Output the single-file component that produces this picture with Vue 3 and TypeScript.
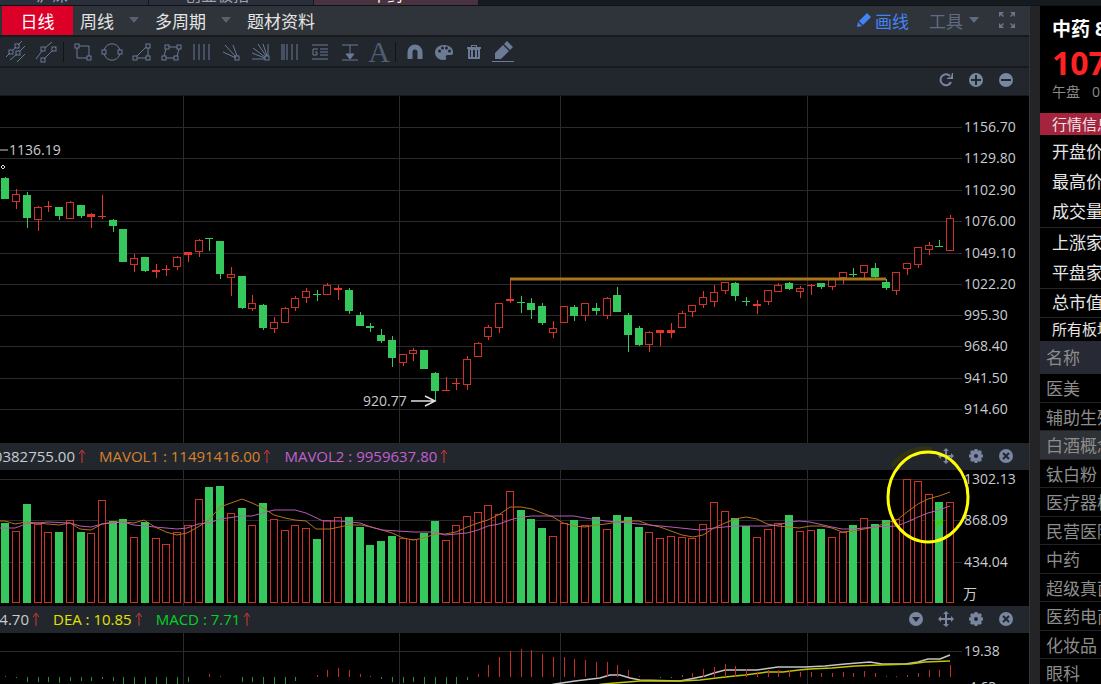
<script setup lang="ts">
type Candle = [dir: 'u' | 'd', high: number, top: number, bottom: number, low: number]
type Point = [number, number]

const candles: Candle[] = [
  ['d', 177, 178, 199, 199], ['u', 189, 194, 202, 209], ['d', 192, 195, 218, 228], ['u', 206, 207, 220, 231],
  ['u', 201, 206, 207, 212], ['d', 207, 207, 216, 220], ['u', 201, 202, 219, 219], ['d', 205, 205, 216, 218],
  ['u', 213, 214, 217, 228], ['u', 195, 216, 217, 219], ['d', 219, 220, 226, 232], ['d', 229, 229, 262, 262],
  ['u', 254, 258, 265, 272], ['d', 257, 257, 271, 272], ['u', 264, 270, 272, 278], ['u', 265, 269, 270, 276],
  ['u', 256, 257, 267, 270], ['u', 252, 252, 255, 262], ['u', 239, 240, 252, 257], ['d', 238, 238, 239, 251],
  ['d', 241, 241, 274, 279], ['u', 267, 274, 278, 296], ['d', 276, 276, 308, 309], ['u', 295, 303, 309, 311],
  ['d', 304, 305, 328, 330], ['u', 317, 322, 329, 333], ['u', 307, 308, 323, 323], ['u', 296, 298, 308, 311],
  ['u', 288, 291, 298, 303], ['d', 290, 294, 295, 301], ['u', 283, 285, 295, 295], ['u', 285, 288, 290, 300],
  ['d', 288, 290, 311, 314], ['d', 312, 315, 326, 326], ['d', 323, 326, 328, 332], ['d', 329, 335, 341, 343],
  ['d', 336, 340, 358, 367], ['u', 354, 354, 363, 366], ['u', 348, 350, 354, 361], ['d', 350, 350, 369, 369],
  ['d', 372, 373, 391, 401], ['u', 377, 390, 391, 391], ['u', 378, 383, 384, 390], ['u', 356, 359, 385, 390],
  ['u', 342, 343, 357, 357], ['u', 325, 327, 337, 340], ['u', 303, 303, 328, 333], ['u', 278, 299, 301, 303],
  ['d', 296, 302, 303, 313], ['d', 298, 303, 310, 319], ['d', 303, 306, 323, 325], ['u', 321, 328, 333, 338],
  ['u', 306, 306, 323, 323], ['d', 305, 307, 316, 321], ['u', 303, 303, 316, 321], ['d', 303, 308, 311, 315],
  ['u', 297, 298, 316, 319], ['d', 287, 295, 312, 312], ['d', 313, 315, 335, 352], ['d', 326, 328, 345, 346],
  ['u', 331, 332, 345, 352], ['u', 330, 330, 333, 346], ['u', 323, 330, 333, 338], ['u', 311, 313, 328, 328],
  ['u', 305, 305, 312, 317], ['u', 291, 297, 305, 308], ['u', 285, 292, 302, 307], ['u', 282, 282, 291, 294],
  ['d', 282, 283, 296, 301], ['d', 297, 301, 302, 306], ['u', 300, 304, 306, 314], ['u', 290, 290, 302, 305],
  ['u', 283, 285, 292, 292], ['d', 282, 283, 289, 290], ['u', 286, 288, 292, 298], ['u', 284, 285, 286, 295],
  ['d', 283, 283, 287, 289], ['u', 279, 279, 287, 290], ['u', 272, 272, 278, 284], ['d', 268, 274, 275, 277],
  ['u', 265, 265, 273, 278], ['d', 263, 268, 277, 278], ['d', 279, 282, 288, 290], ['u', 272, 272, 291, 295],
  ['u', 263, 263, 269, 275], ['u', 247, 247, 265, 268], ['u', 242, 245, 250, 255], ['d', 240, 246, 247, 247],
  ['u', 215, 218, 251, 251],
]

const volumeTops = [
  523, 531, 504, 524, 532, 532, 520, 532, 533, 500, 521, 519, 537, 522, 538, 544, 532, 525, 499, 487,
  486, 513, 508, 525, 503, 519, 530, 525, 528, 539, 520, 517, 517, 527, 545, 541, 536, 538, 539, 533,
  521, 540, 525, 516, 512, 505, 514, 491, 510, 519, 528, 536, 523, 520, 525, 517, 529, 515, 517, 527,
  532, 538, 536, 537, 538, 524, 502, 511, 518, 526, 537, 529, 523, 515, 531, 530, 529, 537, 532, 525,
  518, 524, 520, 519, 479, 481, 494, 502, 502,
]

// Ends of the histogram bars; values above the zero line are lower than ZERO.
const ZERO = 677
const histogram = [
  676, 678, 682, 682, 682, 683, 681, 681, 681, 679, 681, 684, 684, 684, 684, 684, 684, 682, 677, 674,
  676, 677, 682, 682, 684, 684, 684, 681, 677, 675, 670, 668, 670, 674, 676, 679, 682, 683, 682, 684,
  684, 684, 684, 680, 674, 665, 657, 651, 649, 650, 654, 657, 657, 659, 660, 662, 662, 665, 670, 676,
  677, 678, 678, 675, 673, 669, 667, 664, 666, 669, 672, 670, 670, 670, 672, 672, 673, 673, 672, 673,
  671, 673, 676, 676, 675, 673, 670, 670, 665,
]

const fastAverage: Point[] = [
  [0, 521], [5, 521], [15, 524], [26, 522], [37, 523], [59, 525], [70, 523], [80, 529], [91, 530], [102, 524],
  [112, 522], [123, 522], [134, 523], [144, 520], [155, 527], [166, 532], [177, 535], [187, 533], [198, 527],
  [209, 520], [220, 507], [242, 499], [252, 503], [263, 508], [274, 515], [285, 518], [295, 520], [306, 521],
  [316, 529], [330, 529], [349, 525], [361, 525], [371, 527], [382, 530], [392, 533], [403, 538], [413, 540],
  [424, 538], [435, 534], [445, 534], [456, 532], [467, 527], [478, 523], [488, 520], [500, 514], [510, 507],
  [521, 507], [532, 509], [542, 513], [553, 517], [563, 523], [574, 526], [585, 527], [596, 525], [606, 524],
  [617, 522], [628, 521], [639, 521], [650, 525], [660, 527], [671, 531], [682, 535], [693, 537], [703, 535],
  [714, 528], [725, 523], [735, 519], [746, 517], [757, 519], [767, 524], [778, 526], [789, 527], [799, 528],
  [810, 526], [821, 526], [832, 528], [842, 532], [853, 531], [864, 529], [875, 527], [886, 523], [897, 520],
  [907, 512], [918, 504], [928, 499], [939, 496], [950, 492],
]
const slowAverage: Point[] = [
  [0, 528], [15, 528], [26, 524], [48, 522], [70, 523], [80, 526], [91, 527], [102, 524], [123, 522], [134, 525],
  [155, 527], [177, 529], [187, 528], [198, 524], [209, 523], [220, 519], [242, 516], [252, 516], [263, 513],
  [274, 510], [295, 510], [306, 513], [323, 521], [340, 521], [360, 523], [371, 527], [382, 530], [413, 532],
  [435, 532], [445, 535], [456, 534], [467, 533], [478, 530], [488, 526], [499, 524], [510, 520], [521, 517],
  [532, 516], [574, 516], [585, 518], [606, 521], [628, 523], [650, 525], [671, 527], [700, 530], [714, 528],
  [735, 526], [767, 526], [778, 525], [789, 522], [799, 521], [810, 522], [832, 527], [842, 529], [853, 529],
  [864, 528], [875, 527], [897, 526], [907, 522], [918, 517], [928, 513], [939, 510], [950, 506],
]
const difLine: Point[] = [
  [545, 686], [555, 684], [575, 681], [600, 678], [610, 675], [620, 675], [630, 678], [640, 680], [680, 681],
  [695, 678], [705, 676], [714, 673], [725, 670], [757, 670], [778, 667], [805, 667], [825, 666], [845, 664],
  [870, 662], [882, 664], [905, 664], [918, 662], [928, 659], [940, 659], [950, 655],
]
const deaLine: Point[] = [
  [590, 686], [603, 684], [640, 681], [680, 681], [700, 680], [725, 677], [745, 675], [767, 672], [783, 672],
  [799, 670], [810, 669], [832, 668], [855, 666], [880, 665], [910, 664], [925, 662], [950, 661],
]

const priceAxis: [number, string][] = [
  [127, '1156.70'], [158, '1129.80'], [190, '1102.90'], [221, '1076.00'], [253, '1049.10'],
  [284, '1022.20'], [315, '995.30'], [346, '968.40'], [378, '941.50'], [409, '914.60'],
]
const volumeAxis: [number, string][] = [[479, '1302.13'], [520, '868.09'], [562, '434.04']]
const timeMarks = [183, 399, 560, 807]

const barX = (i: number): number => Math.round(5.4 + 10.735 * i)
const toPoints = (line: Point[]): string => line.map((p) => p.join(',')).join(' ')

const tabs = ['沪深', '创业板指', '中药']
const quotes = [['开盘价', '最高价', '成交量'], ['上涨家数', '平盘家数'], ['总市值']]
const sectors = ['医美', '辅助生殖', '白酒概念', '钛白粉', '医疗器械', '民营医院', '中药', '超级真菌', '医药电商', '化妆品', '眼科']

type Shape = { name: string; path: string; nodes?: Point[]; fill?: string }
const channelTools: Shape[] = [
  { name: '平行线', path: 'M2 17 6 13M9 10 12 7M14 5 18 1M6 20 13 14M16 11 21 6M13 22 21 14', nodes: [[13, 6], [7, 12], [14, 13]] },
  { name: '通道线', path: 'M1 19 7 11M10 8 17 2M9 19 17 11M20 8 21 7', nodes: [[8, 9], [19, 9], [8, 20]] },
]
const shapeTools: Shape[] = [
  { name: '矩形', path: 'M8 6H18V16M16 18H6V8', nodes: [[6, 6], [18, 18]] },
  { name: '圆', path: 'M5 8A8 8 0 0 1 19 8M5 16A8 8 0 0 0 19 16M5 8 4 10M19 8 20 10M5 16 4 14M19 16 20 14', nodes: [[4, 12], [20, 12]] },
  { name: '三角形', path: 'M7 16 16 7M18 8V16M7 18H16', nodes: [[5, 18], [18, 6], [18, 18]] },
  { name: '平行四边形', path: 'M9 7H17M19 9 17 16M14 18H6M4 16 6 9', nodes: [[7, 7], [19, 7], [16, 18], [4, 18]] },
  { name: '周期线', path: 'M5 4V20M10 4V20M15 4V20M20 4V20' },
  { name: '速阻线', path: 'M4 12 17 18M6 5 17 17M14 5 18 16', nodes: [[18, 18]] },
  { name: '甘氏线', path: 'M3 19H16M3 13 16 18M4 8 16 17M9 4 17 16M14 4 18 16M19 4V16', nodes: [[18, 18]] },
  { name: '斐波那契', path: 'M4 4V20M6 4V20M9 4V20M14 4V20M19 4V20' },
  { name: '黄金分割', path: 'M4 5H20M12 9H20M12 12H20M12 15H20M4 19H20M10 9H5V15H9V12H7' },
  { name: '测量', path: 'M4 5H20M4 20H20M12 5V15', fill: 'M8 14H16L12 19Z' },
]
</script>

<template>
  <div class="app">
    <div class="tabstrip">
      <span v-for="(t, i) in tabs" :key="t" class="tab" :class="{ current: i === 2 }">{{ t }}</span>
    </div>
    <div class="body">
      <main class="main">
        <nav class="menu">
          <button class="period on">日线</button>
          <button class="period">周线</button>
          <button class="caret" aria-label="周线选项"><svg viewBox="0 0 10 6"><path d="M0 0H10L5 6Z" /></svg></button>
          <button class="period">多周期</button>
          <button class="caret" aria-label="多周期选项"><svg viewBox="0 0 10 6"><path d="M0 0H10L5 6Z" /></svg></button>
          <button class="period">题材资料</button>
          <span class="grow"></span>
          <button class="draw">
            <svg width="16" height="16" viewBox="0 0 16 16"><path d="M11 1 15 5 7 13 3 9ZM2 10 6 14 1 15Z" /></svg>画线
          </button>
          <button class="tools">
            工具<svg width="10" height="6" viewBox="0 0 10 6"><path d="M0 0H10L5 6Z" /></svg>
          </button>
          <button class="full" aria-label="全屏">
            <svg width="18" height="18" viewBox="0 0 18 18">
              <path d="M1 1H6L4 3 6 5 5 6 3 4 1 6ZM17 1H12L14 3 12 5 13 6 15 4 17 6ZM1 17H6L4 15 6 13 5 12 3 14 1 12ZM17 17H12L14 15 12 13 13 12 15 14 17 12Z" />
            </svg>
          </button>
        </nav>

        <div class="drawbar">
          <div class="group first">
            <button v-for="s in channelTools" :key="s.name" :aria-label="s.name">
              <svg viewBox="0 0 24 24" class="line">
                <path :d="s.path" />
                <rect v-for="(n, k) in s.nodes" :key="k" :x="n[0] - 2" :y="n[1] - 2" width="4" height="4" />
              </svg>
            </button>
          </div>
          <i class="sep"></i>
          <div class="group shapes">
            <button v-for="s in shapeTools" :key="s.name" :aria-label="s.name">
              <svg viewBox="0 0 24 24" class="line">
                <path :d="s.path" />
                <path v-if="s.fill" :d="s.fill" class="solid" />
                <rect v-for="(n, k) in s.nodes" :key="k" :x="n[0] - 2" :y="n[1] - 2" width="4" height="4" />
              </svg>
            </button>
            <button class="letter">A</button>
          </div>
          <i class="sep"></i>
          <div class="group edits">
            <button aria-label="磁铁">
              <svg viewBox="0 0 24 24" class="bold"><path d="M7 19V12A5 5 0 0 1 17 12V19" /></svg>
            </button>
            <button aria-label="颜色">
              <svg viewBox="0 0 24 24" class="fill">
                <path fill-rule="evenodd" d="M12 5C7 5 3 8 3 12.500C3 17 7 20 11 20C14 20 15 19 14 18C13 16 14 15 16 15H19C21 15 21 13 21 12C21 8 17 5 12 5ZM6 11A1.500 1.500 0 1 0 9 11A1.500 1.500 0 1 0 6 11ZM9 8A1.500 1.500 0 1 0 12 8A1.500 1.500 0 1 0 9 8ZM13 8A1.500 1.500 0 1 0 16 8A1.500 1.500 0 1 0 13 8ZM16 11A1.500 1.500 0 1 0 19 11A1.500 1.500 0 1 0 16 11Z" />
              </svg>
            </button>
            <button aria-label="删除">
              <svg viewBox="0 0 24 24" class="fill">
                <path fill-rule="evenodd" d="M9 5H15V7H19V9H18V19H6V9H5V7H9ZM10 6V7H14V6ZM8 10V17H9V10ZM11 10V17H13V10ZM15 10V17H16V10Z" />
              </svg>
            </button>
            <button aria-label="画笔">
              <svg viewBox="0 0 24 24" class="fill"><path d="M12 5 18 11 10 19H4V13ZM13 4 16 1 22 7 19 10ZM1 21H23V22H1Z" /></svg>
            </button>
          </div>
        </div>

        <div class="zoombar">
          <button aria-label="刷新">
            <svg viewBox="0 0 16 16"><path d="M13 10A5.500 5.500 0 1 1 12 4" fill="none" stroke="currentColor" stroke-width="2" /><path d="M15 1V7H9V6L13 5 14 1Z" /></svg>
          </button>
          <button aria-label="放大"><svg viewBox="0 0 16 16"><circle cx="8" cy="8" r="7" /><path class="cut" d="M8 3V13M3 8H13" /></svg></button>
          <button aria-label="缩小"><svg viewBox="0 0 16 16"><circle cx="8" cy="8" r="7" /><path class="cut" d="M3 8H13" /></svg></button>
        </div>

        <div class="charts">
          <svg class="plot" viewBox="0 96 1029 347" role="img" aria-label="K线图">
            <g class="grid">
              <rect v-for="x in timeMarks" :key="x" :x="x" y="96" width="1" height="347" />
              <rect v-for="[y] in priceAxis" :key="y" x="0" :y="y" width="962" height="1" />
            </g>
            <g shape-rendering="crispEdges">
              <g v-for="([dir, high, top, bottom, low], i) in candles" :key="i" :class="dir">
                <rect v-if="top > high" class="solid" :x="barX(i)" :y="high" width="1" :height="top - high" />
                <rect v-if="low > bottom" class="solid" :x="barX(i)" :y="bottom" width="1" :height="low - bottom" />
                <rect v-if="dir === 'd' || bottom - top < 4" class="solid" :x="barX(i) - 4" :y="top" width="8" :height="bottom - top" />
                <rect v-else class="hollow" :x="barX(i) - 3.5" :y="top + 0.5" width="7" :height="bottom - top - 1" />
              </g>
            </g>
            <path d="M510 279H886" stroke="#a97519" stroke-width="3" />
            <path d="M0 150H8" stroke="#c8ccd0" />
            <path d="M3 165 5 167 3 169 1 167Z" fill="none" stroke="#ddd" />
            <path d="M411 401H434M425 396 435 401 425 406" fill="none" stroke="#e0e0e0" stroke-width="1.500" />
            <text x="9" y="155">1136.19</text>
            <text x="363" y="406">920.77</text>
            <text v-for="[y, label] in priceAxis" :key="label" x="964" :y="y + 5">{{ label }}</text>
          </svg>

          <div class="panelhead">
            <span class="value lead">0382755.00<svg class="up" viewBox="0 0 7 14"><path d="M4 14V2M1 5 4 1 7 5" /></svg></span>
            <span class="value orange">MAVOL1 : 11491416.00<svg class="up" viewBox="0 0 7 14"><path d="M4 14V2M1 5 4 1 7 5" /></svg></span>
            <span class="value violet">MAVOL2 : 9959637.80<svg class="up" viewBox="0 0 7 14"><path d="M4 14V2M1 5 4 1 7 5" /></svg></span>
            <span class="grow"></span>
            <button aria-label="移动"><svg viewBox="0 0 16 16"><path d="M8 0 11 3H9V7H13V5L16 8 13 11V9H9V13H11L8 16 5 13H7V9H3V11L0 8 3 5V7H7V3H5Z" /></svg></button>
            <button aria-label="设置"><svg viewBox="0 0 16 16"><circle cx="8" cy="8" r="4" class="ring" /><path class="teeth" d="M8 1V4M8 12V15M1 8H4M12 8H15M3 3 5 5M11 11 13 13M13 3 11 5M5 11 3 13" /></svg></button>
            <button aria-label="关闭"><svg viewBox="0 0 16 16"><circle cx="8" cy="8" r="7" /><path class="cut" d="M5 5 11 11M11 5 5 11" /></svg></button>
          </div>

          <svg class="plot" viewBox="0 470 1029 136" role="img" aria-label="成交量">
            <g class="grid">
              <rect v-for="x in timeMarks" :key="x" :x="x" y="470" width="1" height="136" />
              <rect v-for="[y] in volumeAxis" :key="y" x="0" :y="y" width="962" height="1" />
            </g>
            <g shape-rendering="crispEdges">
              <g v-for="(top, i) in volumeTops" :key="i" :class="candles[i][0]">
                <rect v-if="candles[i][0] === 'd'" class="solid" :x="barX(i) - 4" :y="top" width="8" :height="603 - top" />
                <rect v-else class="hollow" :x="barX(i) - 3.5" :y="top + 0.5" width="7" :height="602 - top" />
              </g>
            </g>
            <polyline :points="toPoints(fastAverage)" stroke="#b8721c" />
            <polyline :points="toPoints(slowAverage)" stroke="#b65cb8" />
            <path d="M935 523 943 519V523L935 526Z" fill="#35d400" />
            <text v-for="[y, label] in volumeAxis" :key="label" x="964" :y="y + 5">{{ label }}</text>
            <text x="963" y="599">万</text>
          </svg>

          <div class="panelhead">
            <span class="value lead short">4.70<svg class="up" viewBox="0 0 7 14"><path d="M4 14V2M1 5 4 1 7 5" /></svg></span>
            <span class="value yellow">DEA : 10.85<svg class="up" viewBox="0 0 7 14"><path d="M4 14V2M1 5 4 1 7 5" /></svg></span>
            <span class="value green">MACD : 7.71<svg class="up" viewBox="0 0 7 14"><path d="M4 14V2M1 5 4 1 7 5" /></svg></span>
            <span class="grow"></span>
            <button aria-label="指标"><svg viewBox="0 0 16 16"><circle cx="8" cy="8" r="7" /><path fill="#22272e" d="M4 6H12L8 11Z" /></svg></button>
            <button aria-label="移动"><svg viewBox="0 0 16 16"><path d="M8 0 11 3H9V7H13V5L16 8 13 11V9H9V13H11L8 16 5 13H7V9H3V11L0 8 3 5V7H7V3H5Z" /></svg></button>
            <button aria-label="设置"><svg viewBox="0 0 16 16"><circle cx="8" cy="8" r="4" class="ring" /><path class="teeth" d="M8 1V4M8 12V15M1 8H4M12 8H15M3 3 5 5M11 11 13 13M13 3 11 5M5 11 3 13" /></svg></button>
            <button aria-label="关闭"><svg viewBox="0 0 16 16"><circle cx="8" cy="8" r="7" /><path class="cut" d="M5 5 11 11M11 5 5 11" /></svg></button>
          </div>

          <svg class="plot" viewBox="0 633 1029 62" role="img" aria-label="MACD">
            <g class="grid">
              <rect v-for="x in timeMarks" :key="x" :x="x" y="633" width="1" height="62" />
              <rect x="0" y="651" width="962" height="1" />
            </g>
            <polyline :points="toPoints(difLine)" stroke="#c4c4c4" stroke-width="1.500" />
            <polyline :points="toPoints(deaLine)" stroke="#c2c200" stroke-width="1.500" />
            <g shape-rendering="crispEdges">
              <rect
                v-for="(end, i) in histogram" :key="i" :x="barX(i)" :y="Math.min(end, ZERO)" width="1"
                :height="Math.abs(end - ZERO)" :fill="end < ZERO ? '#c92c22' : '#24913f'"
              />
            </g>
            <text x="964" y="656">19.38</text>
            <text x="964" y="692">-4.63</text>
          </svg>

          <svg class="annotation" viewBox="0 96 1029 600">
            <path d="M892 466A43 48 0 0 1 932 449" stroke="#33340f" stroke-width="4" />
            <ellipse cx="928" cy="497" rx="40" ry="45" stroke="#ffff00" stroke-width="3" />
          </svg>
        </div>
      </main>

      <div class="divider"></div>

      <aside class="side">
        <h1>中药 8</h1>
        <p class="price">107</p>
        <p class="state">午盘<span>0</span></p>
        <h2>行情信息</h2>
        <div v-for="(set, i) in quotes" :key="i" class="quotes">
          <p v-for="q in set" :key="q">{{ q }}</p>
        </div>
        <p class="all">所有板块</p>
        <table>
          <thead><tr><th>名称</th></tr></thead>
          <tbody>
            <tr v-for="s in sectors" :key="s" :class="{ hot: s === '白酒概念' }"><td>{{ s }}</td></tr>
          </tbody>
        </table>
      </aside>
    </div>
  </div>
</template>

<style>
body { margin: 0; background: #000; overflow: hidden; }
</style>

<style scoped>
.app {
  display: flex;
  flex-direction: column;
  height: 100vh;
  overflow: hidden;
  background: #000;
  color: #c8ccd0;
  font: 14px "Open Sans", "Noto Sans CJK SC", sans-serif;
}
button {
  display: flex;
  align-items: center;
  justify-content: center;
  margin: 0;
  padding: 0;
  border: 0;
  background: none;
  color: inherit;
  font: inherit;
  white-space: nowrap;
}
svg { fill: currentColor; }
p, h1, h2 { margin: 0; white-space: nowrap; }
.grow { flex: 1; }

.tabstrip { display: flex; flex: none; height: 5px; background: #151a21; border-bottom: 1px solid #101215; }
.tab {
  display: flex;
  flex-direction: column;
  justify-content: flex-end;
  box-sizing: border-box;
  width: 165px;
  padding-left: 36px;
  overflow: hidden;
  border-right: 1px solid #14171e;
  background: #2b2e3b;
  color: #a0a3aa;
  font-size: 16px;
  line-height: 20px;
}
.tab:first-child { width: 149px; }
.tab.current { padding-left: 57px; background: #4a3340; color: #fff; }

.body { display: flex; flex: 1; min-height: 0; }
.main { flex: 1; min-width: 0; background: #22272e; }
.divider { flex: none; box-sizing: border-box; width: 11px; border-left: 1px solid #34353a; background: #242427; }

.menu {
  display: flex;
  align-items: stretch;
  height: 29px;
  padding: 0 13px 0 2px;
  border-bottom: 2px solid #17191c;
  background: #2f343a;
  color: #e4e4e4;
  font-size: 17px;
}
.menu button { padding-bottom: 1px; }
.period.on { width: 71px; margin-right: 7px; background: #dc0028; color: #fff; }
.caret { width: 41px; color: #596170; }
.caret svg { width: 10px; height: 6px; margin-right: 2px; }
.draw { gap: 3px; color: #4383f5; }
.tools { gap: 6px; margin: 0 19px 0 20px; color: #5f6c84; }
.full { color: #69758b; }

.drawbar {
  display: flex;
  align-items: center;
  height: 29px;
  border-bottom: 2px solid #17191c;
  color: #6b7a95;
}
.group { display: grid; align-items: center; justify-items: center; }
.group button { width: 24px; height: 28px; }
.group svg { width: 24px; height: 24px; }
.first { grid-template-columns: 1fr 1fr; width: 62px; }
.shapes { grid-template-columns: repeat(11, 1fr); width: 326px; margin-left: 4px; }
.edits { grid-template-columns: repeat(4, 1fr); width: 118px; margin-left: 4px; }
.sep { width: 1px; height: 20px; margin-left: 1px; background: #111317; }
.line { fill: none; stroke: currentColor; stroke-width: 1; }
.line .solid { fill: currentColor; }
.bold { fill: none; stroke: currentColor; stroke-width: 5; }
.group .letter { font: 30px/28px "Liberation Serif", serif; color: #505c73; }

.zoombar {
  display: flex;
  align-items: center;
  justify-content: flex-end;
  gap: 14px;
  box-sizing: border-box;
  height: 28px;
  padding: 0 15px 3px 0;
  border-bottom: 1px solid #15181c;
  color: #7886a0;
}
.zoombar svg, .panelhead button svg { display: block; width: 16px; height: 16px; }
.cut { fill: none; stroke: #22272e; stroke-width: 2; }
.ring { fill: none; stroke: currentColor; stroke-width: 4; }
.teeth { fill: none; stroke: currentColor; stroke-width: 3; }

.charts { position: relative; background: #000; }
.plot { display: block; width: 100%; height: auto; }
.plot text { fill: #c8ccd0; font-size: 14px; }
.plot polyline { fill: none; }
.grid { fill: #2b2b2d; }
.u .solid { fill: #e8352b; }
.u .hollow { fill: #000; stroke: #cf3027; }
.d .solid { fill: #36c85c; }
.annotation { position: absolute; inset: 0 0 auto; width: 100%; fill: none; pointer-events: none; }

.panelhead {
  display: flex;
  align-items: center;
  gap: 14px;
  box-sizing: border-box;
  height: 27px;
  padding: 0 15px 2px 0;
  background: #22272e;
  color: #7886a0;
}
.value { display: flex; align-items: center; gap: 3px; white-space: nowrap; color: #c8ccd0; font-size: 15px; line-height: 20px; }
.lead { justify-content: flex-end; width: 85px; overflow: hidden; }
.lead.short { width: 39px; }
.up { flex: none; width: 7px; height: 14px; fill: none; stroke: #d8372f; stroke-width: 1; }
.orange { color: #d9822b; }
.violet { color: #c45fd0; }
.yellow { color: #e2e200; }
.green { color: #00d420; }

.side { flex: none; width: 61px; margin-top: 1px; overflow: hidden; background: #000; color: #e6e6e6; font-size: 17px; }
h1 { padding: 8px 0 0 12px; color: #fff; font-size: 19px; font-weight: 700; line-height: 28px; }
.price { padding-left: 12px; color: #ff2222; font-size: 32px; font-weight: 700; line-height: 40px; }
.state { height: 30px; padding-left: 12px; color: #8c8c8c; font-size: 14px; line-height: 18px; }
.state span { padding-left: 12px; }
h2 { margin-bottom: 2px; padding-left: 12px; background: #a3243c; color: #f0e4e6; font-size: 15px; font-weight: 400; line-height: 22px; }
.quotes { padding-left: 12px; border-bottom: 1px solid #252528; line-height: 30px; }
.quotes:nth-of-type(3) { line-height: 28px; }
.all { padding-left: 12px; font-size: 15px; line-height: 23px; }
table { width: 100%; border-collapse: collapse; color: #8d8d8d; line-height: 20px; }
th, td { padding: 0 0 0 6px; font-weight: 400; text-align: left; white-space: nowrap; }
th { height: 33px; background: #272a35; }
td { height: 25px; padding-top: 2px; border-bottom: 1px solid #202126; }
tr:nth-child(odd) td { height: 26px; }
.hot td { background: #2e3135; }
</style>
